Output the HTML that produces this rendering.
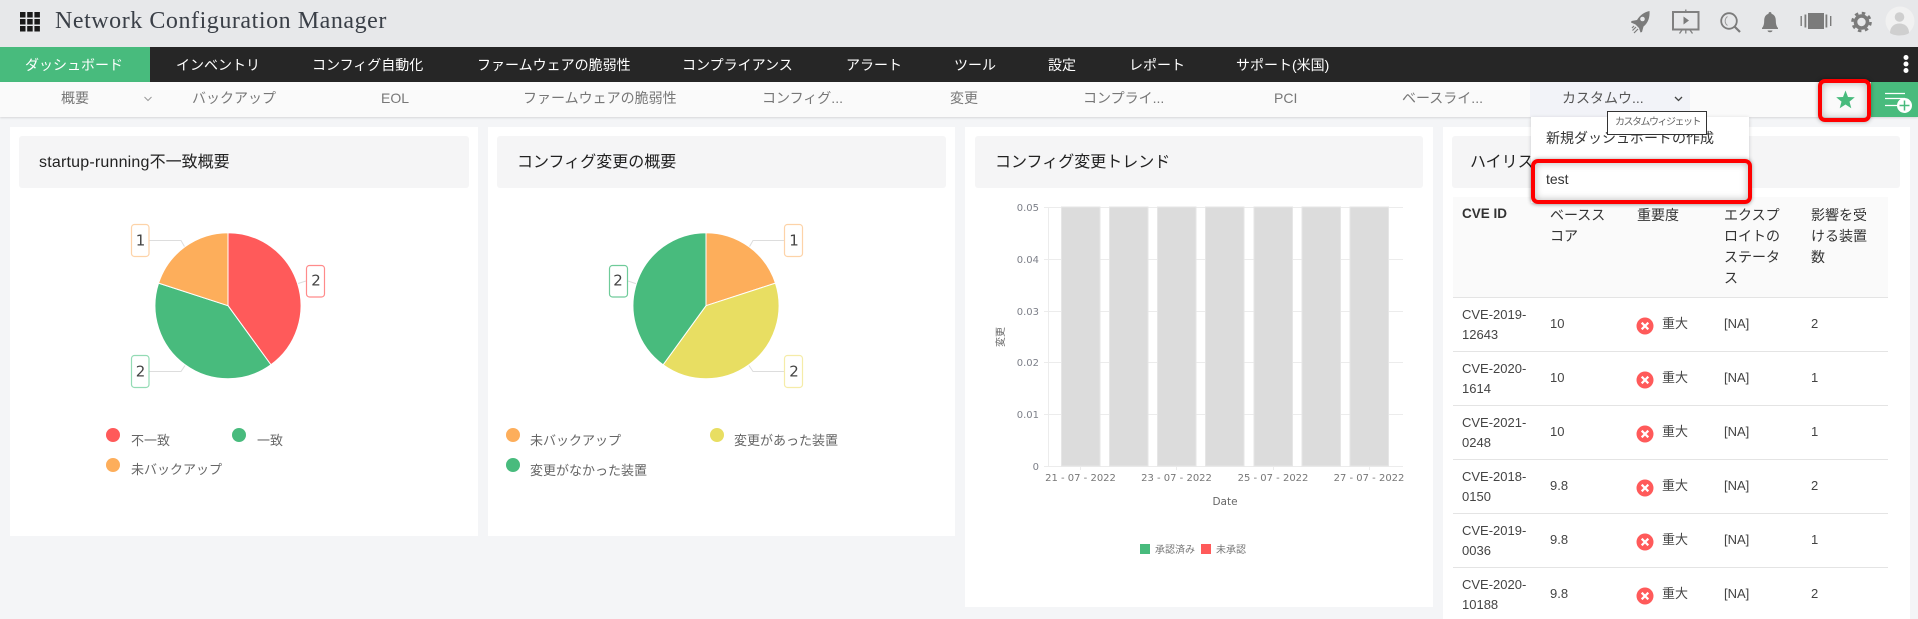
<!DOCTYPE html>
<html lang="ja"><head><meta charset="utf-8"><title>Network Configuration Manager</title>
<style>
html,body{margin:0;padding:0;width:1918px;height:619px;overflow:hidden;background:#f4f5f7}
body{position:relative;font-family:"Liberation Sans","Noto Sans CJK JP",sans-serif;font-size:14px;color:#333}
.a{position:absolute}
.t{position:absolute;white-space:nowrap;line-height:20px;height:20px}
.n{color:#fff;top:55px}
.s{color:#777;top:88px}
.card{position:absolute;background:#fff;top:127px}
.ch{position:absolute;background:#f5f5f6;top:136px;height:52px;border-radius:3px}
.h{font-size:16px;color:#222;top:153px}
.l{color:#666;font-size:13px}
.c{color:#444;font-size:13px}
.th{color:#333}
.rb{position:absolute;border:4px solid #f00;border-radius:7px;box-sizing:border-box;box-shadow:inset 0 0 8px rgba(0,0,0,.28),0 0 4px rgba(0,0,0,.35)}
svg{position:absolute;left:0;top:0}
svg text{font-family:"DejaVu Sans","Noto Sans CJK JP",sans-serif}
</style></head><body>

<!-- header -->
<div class="a" style="left:0;top:0;width:1918px;height:47px;background:#e7e8ea"></div>
<div class="a" style="left:0;top:47px;width:1918px;height:35px;background:#262626"></div>
<div class="a" style="left:0;top:47px;width:150px;height:35px;background:#48bb7d"></div>
<div class="a" style="left:0;top:82px;width:1918px;height:35px;background:#fafafa;box-shadow:0 1px 2px rgba(0,0,0,.12)"></div>
<div class="a" style="left:1530px;top:82px;width:160px;height:35px;background:#f2f3f8"></div>
<div class="a" style="left:1871px;top:82px;width:47px;height:35px;background:#48bb7d"></div>

<div class="t" style="left:55px;top:7px;height:28px;line-height:28px;font-family:'Liberation Serif',serif;font-size:24px;letter-spacing:.55px;color:#3a3f47">Network Configuration Manager</div>

<!-- cards -->
<div class="card" style="left:10px;width:468px;height:409px"></div>
<div class="card" style="left:488px;width:467px;height:409px"></div>
<div class="card" style="left:965px;width:468px;height:480px"></div>
<div class="card" style="left:1443px;width:467px;height:492px"></div>
<div class="ch" style="left:19px;width:450px"></div>
<div class="ch" style="left:497px;width:449px"></div>
<div class="ch" style="left:975px;width:448px"></div>
<div class="ch" style="left:1452px;width:448px"></div>
<div class="a" style="left:1453px;top:197px;width:435px;height:100px;background:#fafafa"></div>

<svg width="1918" height="619" viewBox="0 0 1918 619">
  <!-- grid icon -->
  <g fill="#1a1a1a">
    <rect x="20" y="12" width="5.500" height="5.500"/><rect x="27.200" y="12" width="5.500" height="5.500"/><rect x="34.400" y="12" width="5.500" height="5.500"/>
    <rect x="20" y="19" width="5.500" height="5.500"/><rect x="27.200" y="19" width="5.500" height="5.500"/><rect x="34.400" y="19" width="5.500" height="5.500"/>
    <rect x="20" y="26" width="5.500" height="5.500"/><rect x="27.200" y="26" width="5.500" height="5.500"/><rect x="34.400" y="26" width="5.500" height="5.500"/>
  </g>
  <!-- top icons -->
  <g fill="#7b7b7b" stroke="none">
    <path d="M1649.500 11c-5 1-9.500 4-12.500 9l-5.500 1-.5 1.500 4.500 2 3.500 3.500 1.500 4.500 1.500-.5 1.500-5.500c4.500-3.500 6.500-9 6-15.500z"/>
    <circle cx="1642.500" cy="19" r="2.300" fill="#e7e8ea"/>
    <path d="M1636 27l-3.500 3.500M1638 29l-4 4M1634 26l-2 2" stroke="#7b7b7b" stroke-width="1.200" fill="none"/>
    <rect x="1673" y="12" width="25.500" height="17.500" fill="none" stroke="#808080" stroke-width="2"/>
    <path d="M1685.800 9.500V12M1682 30l-2.500 3.500M1685.800 30v3.500M1690 30l2.500 3.500" stroke="#808080" stroke-width="1.300" fill="none"/>
    <path d="M1683.500 16.500l5.500 4-5.500 4z"/>
    <circle cx="1729" cy="21" r="7.800" fill="none" stroke="#7b7b7b" stroke-width="1.800"/>
    <path d="M1727.500 16.500a5.500 5.500 0 0 0 0 9" fill="none" stroke="#9a9a9a" stroke-width="1"/>
    <path d="M1734.500 26.500l5.500 5.500" stroke="#7b7b7b" stroke-width="2.200" fill="none"/>
    <path d="M1770 12c1 0 1.500.7 1.500 1.700 3 1 4.300 3.500 4.300 6.800 0 3.500.7 6 2.200 7.500v1h-16v-1c1.500-1.500 2.200-4 2.200-7.500 0-3.300 1.300-5.800 4.300-6.800 0-1 .5-1.700 1.500-1.700z"/>
    <path d="M1767.500 30.500h5c0 1-1 1.700-2.500 1.700s-2.500-.7-2.500-1.700z"/>
    <rect x="1808" y="13" width="16" height="16"/>
    <rect x="1804.500" y="14.500" width="1.800" height="13"/>
    <rect x="1800.500" y="16" width="1.400" height="10"/>
    <rect x="1825.500" y="14.500" width="1.800" height="13"/>
    <rect x="1830" y="16" width="1.400" height="10"/>
    <circle cx="1861.500" cy="22" r="6" fill="none" stroke="#7b7b7b" stroke-width="3.600"/>
    <circle cx="1861.500" cy="22" r="9" fill="none" stroke="#7b7b7b" stroke-width="2.600" stroke-dasharray="3.500 3.570"/>
    <circle cx="1900" cy="21" r="14.500" fill="#f1f1f1"/>
    <circle cx="1899.500" cy="17" r="4.800" fill="#cfcfcf"/>
    <path d="M1890 33c0-6 4-9.500 9.500-9.500s9.500 3.500 9.500 9.500c-2.500 1.800-6 2.500-9.500 2.500s-7-.7-9.500-2.500z" fill="#cfcfcf"/>
  </g>
  <!-- kebab -->
  <g fill="#fff"><circle cx="1906" cy="57.500" r="2.500"/><circle cx="1906" cy="64" r="2.500"/><circle cx="1906" cy="70.500" r="2.500"/></g>
  <!-- subnav chevrons -->
  <path d="M144.500 97l3.500 3.500 3.500-3.500" fill="none" stroke="#999" stroke-width="1"/>
  <path d="M1675 97l3.500 3.500 3.500-3.500" fill="none" stroke="#444" stroke-width="1.300"/>
  <!-- add widget -->
  <g stroke="#fff" stroke-width="1.300" fill="none"><path d="M1885 93.500h20M1885 98.500h20M1885 105.500h13"/></g>
  <circle cx="1904.500" cy="105.500" r="7.500" fill="#fff"/>
  <path d="M1904.500 100.500v10M1899.500 105.500h10" stroke="#48bb7d" stroke-width="1.500"/>
  <!-- star -->
  <path d="M1845.500 90.500l2.500 6.500 6.800.3-5.300 4.300 1.800 6.700-5.800-3.800-5.800 3.800 1.800-6.700-5.300-4.300 6.800-.3z" fill="#48bb7d"/>

  <!-- pie leaders -->
  <g stroke="#ddd" stroke-width="1" fill="none">
    <path d="M149 240.500h32l4 7"/><path d="M306 281l-8 2.500"/><path d="M149 371.500h32l4-6"/>
    <path d="M784 240.500h-31l-4 7"/><path d="M628 281l9 3"/><path d="M784 371.500h-31l-4-6"/>
  </g>
  <g stroke="#fff" stroke-width="1">
    <path d="M228 305.700V232.700A73 73 0 0 1 270.900 364.760z" fill="#ff5a5a"/>
    <path d="M228 305.700L270.900 364.760A73 73 0 0 1 158.570 283.140z" fill="#48bb7d"/>
    <path d="M228 305.700L158.570 283.140A73 73 0 0 1 228 232.700z" fill="#fdae5b"/>
    <path d="M706 305.700V232.700A73 73 0 0 1 775.430 283.140z" fill="#fdae5b"/>
    <path d="M706 305.700L775.430 283.140A73 73 0 0 1 663.100 364.760z" fill="#e8de62"/>
    <path d="M706 305.700L663.100 364.760A73 73 0 0 1 706 232.700z" fill="#48bb7d"/>
  </g>
  <g fill="#fff" stroke-width="1.200">
    <rect x="131.500" y="224.500" width="17.500" height="32" rx="3" stroke="#fdd3a8"/>
    <rect x="306.500" y="265.500" width="18" height="31.500" rx="3" stroke="#ff8b8b"/>
    <rect x="131.500" y="355.500" width="17.500" height="32" rx="3" stroke="#93dbb4"/>
    <rect x="784.500" y="224.500" width="18" height="32" rx="3" stroke="#fdd3a8"/>
    <rect x="609.500" y="265.500" width="18" height="31.500" rx="3" stroke="#6fcb9a"/>
    <rect x="784.500" y="355.500" width="18" height="32" rx="3" stroke="#f5eca8"/>
  </g>
  <g font-size="15" fill="#444" text-anchor="middle">
    <text x="140.500" y="245.500">1</text><text x="316" y="285.500">2</text><text x="140.500" y="376.500">2</text>
    <text x="794" y="245.500">1</text><text x="618" y="285.500">2</text><text x="794" y="376.500">2</text>
  </g>
  <!-- legend dots -->
  <circle cx="113" cy="435" r="7" fill="#ff5a5a"/><circle cx="239" cy="435" r="7" fill="#48bb7d"/><circle cx="113" cy="465" r="7" fill="#fdae5b"/>
  <circle cx="513" cy="435" r="7" fill="#fdae5b"/><circle cx="717" cy="435" r="7" fill="#e8de62"/><circle cx="513" cy="465" r="7" fill="#48bb7d"/>

  <!-- bar chart -->
  <g stroke="#ececec" stroke-width="1">
    <path d="M1044 207.500h359M1044 259.500h359M1044 311.500h359M1044 362.500h359M1044 414.500h359M1044 466.500h359M1048.500 207v260"/>
    <path d="M1080.500 466v4M1176.500 466v4M1273.500 466v4M1369.500 466v4"/>
  </g>
  <g fill="#dcdcdc" stroke="#e6e6e6" stroke-width="1">
    <rect x="1061.500" y="207" width="38.500" height="259"/>
    <rect x="1109.500" y="207" width="38.500" height="259"/>
    <rect x="1157.500" y="207" width="38.500" height="259"/>
    <rect x="1205.500" y="207" width="38.500" height="259"/>
    <rect x="1254" y="207" width="38.500" height="259"/>
    <rect x="1302" y="207" width="38.500" height="259"/>
    <rect x="1350" y="207" width="38.500" height="259"/>
  </g>
  <g font-size="10" fill="#7c7f88" text-anchor="end">
    <text x="1039" y="211">0.05</text><text x="1039" y="263">0.04</text><text x="1039" y="315">0.03</text><text x="1039" y="366">0.02</text><text x="1039" y="418">0.01</text><text x="1039" y="470">0</text>
  </g>
  <g font-size="10" fill="#777" text-anchor="middle">
    <text x="1080.500" y="481">21 - 07 - 2022</text><text x="1176.500" y="481">23 - 07 - 2022</text><text x="1273" y="481">25 - 07 - 2022</text><text x="1369" y="481">27 - 07 - 2022</text>
    <text x="1225" y="505" font-size="10.500" fill="#666">Date</text>
    <text transform="translate(1004,337) rotate(-90)" font-size="10" fill="#666">変更</text>
  </g>
  <rect x="1140" y="544" width="10" height="10" fill="#48bb7d"/>
  <rect x="1201" y="544" width="10" height="10" fill="#ff5a5a"/>
  <g font-size="10" fill="#777"><text x="1155" y="553">承認済み</text><text x="1216" y="553">未承認</text></g>

  <!-- table lines and status icons -->
  <g stroke="#e4e4e4" stroke-width="1"><path d="M1453 297.500h435M1453 351.500h435M1453 405.500h435M1453 459.500h435M1453 513.500h435M1453 567.500h435"/></g>
  <g>
    <circle cx="1645" cy="326" r="8.500" fill="#ff5a5a"/><path d="M1641.700 322.700l6.600 6.600M1648.300 322.700l-6.600 6.600" stroke="#fff" stroke-width="2.200"/>
    <circle cx="1645" cy="380" r="8.500" fill="#ff5a5a"/><path d="M1641.700 376.700l6.600 6.600M1648.300 376.700l-6.600 6.600" stroke="#fff" stroke-width="2.200"/>
    <circle cx="1645" cy="434" r="8.500" fill="#ff5a5a"/><path d="M1641.700 430.700l6.600 6.600M1648.300 430.700l-6.600 6.600" stroke="#fff" stroke-width="2.200"/>
    <circle cx="1645" cy="488" r="8.500" fill="#ff5a5a"/><path d="M1641.700 484.700l6.600 6.600M1648.300 484.700l-6.600 6.600" stroke="#fff" stroke-width="2.200"/>
    <circle cx="1645" cy="542" r="8.500" fill="#ff5a5a"/><path d="M1641.700 538.700l6.600 6.600M1648.300 538.700l-6.600 6.600" stroke="#fff" stroke-width="2.200"/>
    <circle cx="1645" cy="596" r="8.500" fill="#ff5a5a"/><path d="M1641.700 592.700l6.600 6.600M1648.300 592.700l-6.600 6.600" stroke="#fff" stroke-width="2.200"/>
  </g>
</svg>

<!-- nav -->
<div class="t n" style="left:25px">ダッシュボード</div>
<div class="t n" style="left:176px">インベントリ</div>
<div class="t n" style="left:312px">コンフィグ自動化</div>
<div class="t n" style="left:477px">ファームウェアの脆弱性</div>
<div class="t n" style="left:682px">コンプライアンス</div>
<div class="t n" style="left:846px">アラート</div>
<div class="t n" style="left:954px">ツール</div>
<div class="t n" style="left:1048px">設定</div>
<div class="t n" style="left:1129px">レポート</div>
<div class="t n" style="left:1236px">サポート(米国)</div>

<!-- subnav -->
<div class="t s" style="left:61px">概要</div>
<div class="t s" style="left:192px">バックアップ</div>
<div class="t s" style="left:381px">EOL</div>
<div class="t s" style="left:523px">ファームウェアの脆弱性</div>
<div class="t s" style="left:762px">コンフィグ...</div>
<div class="t s" style="left:950px">変更</div>
<div class="t s" style="left:1083px">コンプライ...</div>
<div class="t s" style="left:1274px">PCI</div>
<div class="t s" style="left:1402px">ベースライ...</div>
<div class="t s" style="left:1562px;color:#555">カスタムウ...</div>

<!-- titles -->
<div class="t h" style="left:39px"><span style="letter-spacing:.2px">startup-running</span>不一致概要</div>
<div class="t h" style="left:517px">コンフィグ変更の概要</div>
<div class="t h" style="left:995px">コンフィグ変更トレンド</div>
<div class="t h" style="left:1470px">ハイリスク脆弱性</div>

<!-- legends -->
<div class="t l" style="left:131px;top:431px">不一致</div>
<div class="t l" style="left:257px;top:431px">一致</div>
<div class="t l" style="left:131px;top:460px">未バックアップ</div>
<div class="t l" style="left:530px;top:431px">未バックアップ</div>
<div class="t l" style="left:734px;top:431px">変更があった装置</div>
<div class="t l" style="left:530px;top:461px">変更がなかった装置</div>

<!-- table -->
<div class="t th" style="left:1462px;top:204px;font-weight:bold;font-size:13.500px">CVE ID</div>
<div class="t th" style="left:1550px;top:205px">ベースス</div><div class="t th" style="left:1550px;top:226px">コア</div>
<div class="t th" style="left:1637px;top:205px">重要度</div>
<div class="t th" style="left:1724px;top:205px">エクスプ</div><div class="t th" style="left:1724px;top:226px">ロイトの</div><div class="t th" style="left:1724px;top:247px">ステータ</div><div class="t th" style="left:1724px;top:268px">ス</div>
<div class="t th" style="left:1811px;top:205px">影響を受</div><div class="t th" style="left:1811px;top:226px">ける装置</div><div class="t th" style="left:1811px;top:247px">数</div>

<div class="t c" style="left:1462px;top:305px">CVE-2019-</div><div class="t c" style="left:1462px;top:325px">12643</div>
<div class="t c" style="left:1550px;top:314px">10</div><div class="t c" style="left:1662px;top:314px">重大</div><div class="t c" style="left:1724px;top:314px">[NA]</div><div class="t c" style="left:1811px;top:314px">2</div>

<div class="t c" style="left:1462px;top:359px">CVE-2020-</div><div class="t c" style="left:1462px;top:379px">1614</div>
<div class="t c" style="left:1550px;top:368px">10</div><div class="t c" style="left:1662px;top:368px">重大</div><div class="t c" style="left:1724px;top:368px">[NA]</div><div class="t c" style="left:1811px;top:368px">1</div>

<div class="t c" style="left:1462px;top:413px">CVE-2021-</div><div class="t c" style="left:1462px;top:433px">0248</div>
<div class="t c" style="left:1550px;top:422px">10</div><div class="t c" style="left:1662px;top:422px">重大</div><div class="t c" style="left:1724px;top:422px">[NA]</div><div class="t c" style="left:1811px;top:422px">1</div>

<div class="t c" style="left:1462px;top:467px">CVE-2018-</div><div class="t c" style="left:1462px;top:487px">0150</div>
<div class="t c" style="left:1550px;top:476px">9.8</div><div class="t c" style="left:1662px;top:476px">重大</div><div class="t c" style="left:1724px;top:476px">[NA]</div><div class="t c" style="left:1811px;top:476px">2</div>

<div class="t c" style="left:1462px;top:521px">CVE-2019-</div><div class="t c" style="left:1462px;top:541px">0036</div>
<div class="t c" style="left:1550px;top:530px">9.8</div><div class="t c" style="left:1662px;top:530px">重大</div><div class="t c" style="left:1724px;top:530px">[NA]</div><div class="t c" style="left:1811px;top:530px">1</div>

<div class="t c" style="left:1462px;top:575px">CVE-2020-</div><div class="t c" style="left:1462px;top:595px">10188</div>
<div class="t c" style="left:1550px;top:584px">9.8</div><div class="t c" style="left:1662px;top:584px">重大</div><div class="t c" style="left:1724px;top:584px">[NA]</div><div class="t c" style="left:1811px;top:584px">2</div>

<!-- dropdown -->
<div class="a" style="left:1531px;top:117px;width:218px;height:86px;background:#fff;box-shadow:0 1px 4px rgba(0,0,0,.18)"></div>
<div class="t" style="left:1546px;top:128px;color:#333">新規ダッシュボードの作成</div>
<div class="t" style="left:1546px;top:169px;color:#333">test</div>
<div class="a" style="left:1607px;top:111px;width:100px;height:24px;background:#fff;border:1px solid #333;box-sizing:border-box"></div>
<div class="t" style="left:1615px;top:113px;font-size:10px;letter-spacing:-1.500px;color:#666">カスタムウィジェット</div>

<!-- highlights -->
<div class="rb" style="left:1531px;top:159px;width:221px;height:45px"></div>
<div class="rb" style="left:1818px;top:79px;width:53px;height:43px"></div>

</body></html>
